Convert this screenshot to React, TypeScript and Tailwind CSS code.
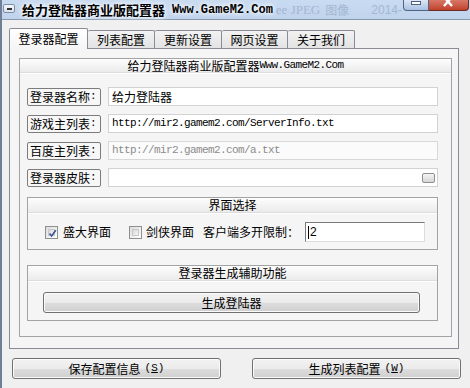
import React from "react";

const mono = "font-['Liberation_Mono',monospace] text-[11px] tracking-[-0.6px]";

function Label({ text }: { text: string }) {
  return (
    <div className="w-[74px] h-[18px] shrink-0 flex items-center pl-[2px] border border-[#7c7c7c] rounded-[2px] bg-[#f7f7f7] text-[12px]">
      {text}
      <span className={mono}>:</span>
    </div>
  );
}

function GroupHeader({ text, h }: { text: React.ReactNode; h: string }) {
  return (
    <div
      className={`${h} shrink-0 flex items-center justify-center bg-[linear-gradient(#fdfdfd,#ebebeb)] border-b border-[#dcdcdc] shadow-[0_1px_0_#ffffff] text-[12px]`}
    >
      {text}
    </div>
  );
}

function Btn({ children, w, h }: { children: React.ReactNode; w: string; h: string }) {
  return (
    <div
      className={`${w} ${h} shrink-0 flex items-center justify-center border border-[#707070] rounded-[3px] bg-[linear-gradient(#f2f2f2_0%,#ebebeb_50%,#dddddd_51%,#cfcfcf_100%)] shadow-[inset_0_0_0_1px_#fbfbfb] text-[12px]`}
    >
      {children}
    </div>
  );
}

function Check({ checked }: { checked: boolean }) {
  return (
    <div className="w-[13px] h-[13px] shrink-0 border border-[#8e8f8f] bg-[linear-gradient(135deg,#dcdcdc,#ffffff)] p-[2px]">
      <div className="w-full h-full border border-[#c8c8c8] bg-[linear-gradient(135deg,#d8d8d8,#f6f6f6)] relative">
        {checked && (
          <svg viewBox="0 0 9 9" className="absolute left-[-1px] top-[-1px] w-[9px] h-[9px]">
            <path d="M1.5 4.5 L3.6 7 L7.8 1.2" fill="none" stroke="#3d5596" strokeWidth="1.6" />
          </svg>
        )}
      </div>
    </div>
  );
}

export default function App() {
  return (
    <div className="w-[470px] h-[388px] overflow-hidden bg-[#f0f0f0] flex flex-col border-l-2 border-[#6f7f96] font-['Noto_Sans_CJK_SC',sans-serif] text-[12px] text-black leading-none">
      {/* title bar */}
      <div className="h-[20px] shrink-0 bg-[linear-gradient(#c9dbf1,#bfd3ec)] border-b border-[#8797ad] flex items-start">
        <div className="shrink-0 ml-[1px] mt-[4px] w-[12px] h-[9px] rounded-[2px] border border-[#7d8ea6] bg-[linear-gradient(#f4f7fb,#d8e1ec)] flex items-center justify-center">
          <div className="w-[5px] h-[2px] bg-[#333]" />
        </div>
        <div className="shrink-0 ml-[7px] h-[19px] flex items-center whitespace-nowrap [text-shadow:0_0_4px_#ffffff,0_0_6px_#ffffff]">
          <span className="text-[13px] font-bold">给力登陆器商业版配置器</span>
          <span className="ml-[7px] font-['Liberation_Mono',monospace] text-[12px] font-bold">Www.GameM2.Com</span>
        </div>
        <div className="shrink-0 ml-[3px] w-[127px] overflow-hidden h-[19px] flex items-center text-[#a3b7d2] text-[12px] whitespace-nowrap">
          <span className="font-['Liberation_Serif',serif] text-[13px]">ee JPEG</span>
          <span className="ml-[5px]">图像</span>
          <span className="ml-[22px] font-['Liberation_Sans',sans-serif]">2014-</span>
        </div>
        <div className="shrink-0 w-[26px] h-[11px] border border-t-0 border-[#4f6684] rounded-bl-[4px] bg-[linear-gradient(#dce7f5,#a9c1e2)] flex justify-center">
          <div className="mt-[1px] w-[10px] h-[4px] bg-white border border-[#4d6380]" />
        </div>
        <div className="shrink-0 w-[40px] h-[11px] border border-t-0 border-l-0 border-[#6a2b22] rounded-br-[4px] bg-[linear-gradient(#d8786a,#c2412b)] flex justify-center overflow-hidden">
          <svg viewBox="0 0 12 10" className="w-[12px] h-[10px] -mt-[3px]">
            <path d="M2 0 L10 9 M10 0 L2 9" stroke="#ffffff" strokeWidth="2.4" />
          </svg>
        </div>
      </div>

      {/* tabs */}
      <div className="mt-[8px] h-[20px] shrink-0 flex items-end pl-[7px] relative z-10">
        <div className="w-[79px] h-[21px] -mb-px flex items-center justify-center border border-b-0 border-[#898c95] rounded-t-[2px] bg-[linear-gradient(#ffffff,#f5f5f5)] text-[12px]">
          登录器配置
        </div>
        {[
          ["列表配置", "w-[67px]"],
          ["更新设置", "w-[67px]"],
          ["网页设置", "w-[66px]"],
          ["关于我们", "w-[67px]"],
        ].map(([t, w]) => (
          <div
            key={t}
            className={`${w} h-[18px] flex items-center justify-center border border-l-0 border-b-0 border-[#898c95] rounded-t-[2px] bg-[linear-gradient(#f2f2f2,#e3e3e3)] text-[12px]`}
          >
            {t}
          </div>
        ))}
      </div>

      {/* tab panel */}
      <div className="ml-[7px] w-[450px] h-[301px] shrink-0 border border-[#898c95] bg-[#f5f5f5] pl-[9px] pt-[9px]">
        <div className="w-[433px] h-[279px] border border-[#a3a3a3] flex flex-col">
          <GroupHeader
            h="h-[14px]"
            text={
              <span className="flex items-center">
                给力登陆器商业版配置器<span className={mono}>Www.GameM2.Com</span>
              </span>
            }
          />

          <div className="mt-[14px] pl-[7px] flex flex-col gap-[8px]">
            <div className="h-[19px] flex items-center gap-[7px]">
              <Label text="登录器名称" />
              <div className="w-[330px] h-[19px] border border-[#d2d2d2] bg-white flex items-center pl-[3px] text-[12px]">
                给力登陆器
              </div>
            </div>
            <div className="h-[19px] flex items-center gap-[7px]">
              <Label text="游戏主列表" />
              <div className={`w-[330px] h-[19px] border border-[#d2d2d2] bg-white flex items-center pl-[3px] ${mono}`}>
                http://mir2.gamem2.com/ServerInfo.txt
              </div>
            </div>
            <div className="h-[19px] flex items-center gap-[7px]">
              <Label text="百度主列表" />
              <div className={`w-[330px] h-[19px] border border-[#d8d8d8] bg-[#fbfbfb] flex items-center pl-[3px] text-[#8c8c8c] ${mono}`}>
                http://mir2.gamem2.com/a.txt
              </div>
            </div>
            <div className="h-[19px] flex items-center gap-[7px]">
              <Label text="登录器皮肤" />
              <div className="w-[330px] h-[19px] border border-[#d2d2d2] bg-white flex items-center justify-end pr-[2px]">
                <div className="w-[13px] h-[10px] border border-[#8f8f8f] rounded-[2px] bg-[linear-gradient(#f4f4f4,#d6d6d6)]" />
              </div>
            </div>
          </div>

          {/* 界面选择 */}
          <div className="mt-[10px] ml-[7px] w-[411px] h-[53px] shrink-0 border border-[#a3a3a3] flex flex-col">
            <GroupHeader h="h-[15px]" text="界面选择" />
            <div className="mt-[9px] h-[20px] flex items-center pl-[17px] text-[12px]">
              <Check checked />
              <span className="ml-[5px]">盛大界面</span>
              <div className="ml-[18px]">
                <Check checked={false} />
              </div>
              <span className="ml-[4px]">剑侠界面</span>
              <span className="ml-[9px]">客户端多开限制：</span>
              <div className="ml-[6px] w-[120px] h-[20px] border border-[#7a7a7a] border-r-[#dcdcdc] border-b-[#dcdcdc] bg-white flex items-center pl-[2px] font-['Liberation_Sans',sans-serif] text-[12px]">
                <div className="w-px h-[13px] bg-black mr-px" />2
              </div>
            </div>
          </div>

          {/* 生成辅助功能 */}
          <div className="mt-[15px] ml-[7px] w-[411px] h-[56px] shrink-0 border border-[#a3a3a3] flex flex-col">
            <GroupHeader h="h-[15px]" text="登录器生成辅助功能" />
            <div className="mt-[11px] pl-[15px]">
              <Btn w="w-[377px]" h="h-[21px]">
                生成登陆器
              </Btn>
            </div>
          </div>
        </div>
      </div>

      {/* bottom buttons */}
      <div className="mt-[9px] flex pl-[10px] gap-[31px]">
        <Btn w="w-[209px]" h="h-[21px]">
          <span>保存配置信息</span>
          <span className="ml-[4px] font-['Liberation_Mono',monospace] text-[11px]">
            (<span className="underline">S</span>)
          </span>
        </Btn>
        <Btn w="w-[209px]" h="h-[21px]">
          <span>生成列表配置</span>
          <span className="ml-[4px] font-['Liberation_Mono',monospace] text-[11px]">
            (<span className="underline">W</span>)
          </span>
        </Btn>
      </div>
    </div>
  );
}
